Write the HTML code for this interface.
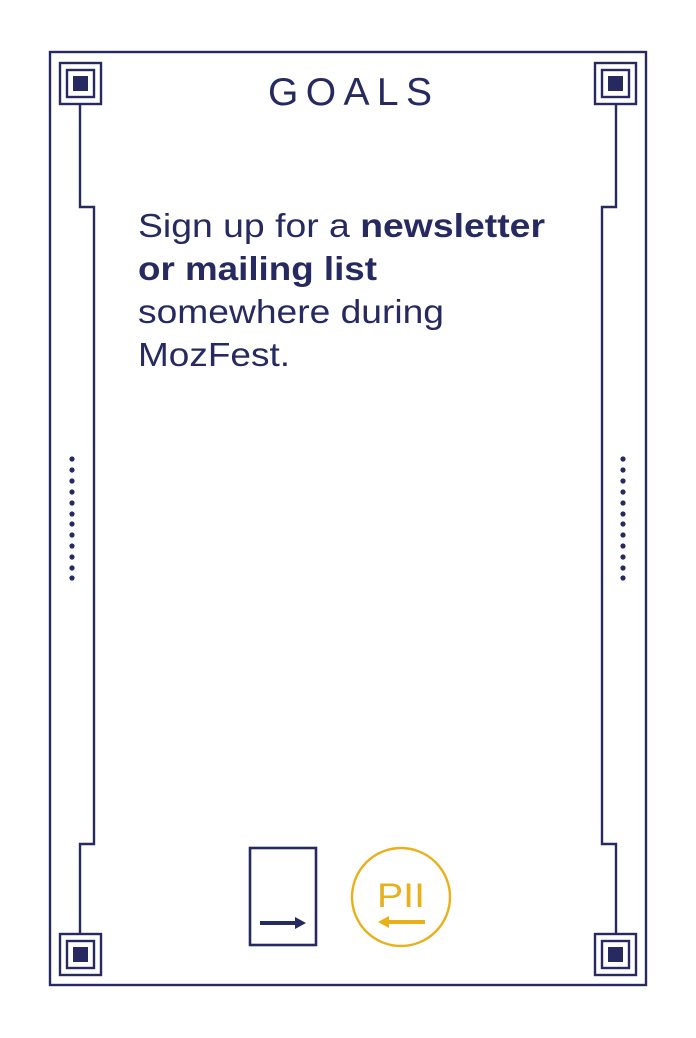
<!DOCTYPE html>
<html><head><style>html,body{margin:0;padding:0;background:#fff;}svg{display:block}</style></head>
<body>
<svg width="696" height="1038" viewBox="0 0 696 1038" xmlns="http://www.w3.org/2000/svg">
<g fill="none" stroke="#262a60" stroke-width="2.4">
<rect x="50" y="52" width="596" height="933"/>
<rect x="60" y="63" width="41" height="41"/><rect x="67" y="70" width="27" height="27"/>
<rect x="595" y="63" width="41" height="41"/><rect x="602" y="70" width="27" height="27"/>
<rect x="60" y="934" width="41" height="41"/><rect x="67" y="941" width="27" height="27"/>
<rect x="595" y="934" width="41" height="41"/><rect x="602" y="941" width="27" height="27"/>
<polyline points="80,104 80,207 94,207 94,844 80,844 80,934"/>
<polyline points="616,104 616,207 602,207 602,844 616,844 616,934"/>
<rect x="250" y="848" width="66" height="97" stroke-width="2.6"/>
</g>
<g fill="#262a60">
<rect x="73" y="76" width="15" height="15"/><rect x="608" y="76" width="15" height="15"/>
<rect x="73" y="947" width="15" height="15"/><rect x="608" y="947" width="15" height="15"/>
<g id="dots">
<circle cx="72" cy="459" r="2.6"/><circle cx="72" cy="470" r="2.6"/><circle cx="72" cy="481" r="2.6"/><circle cx="72" cy="492" r="2.6"/><circle cx="72" cy="503" r="2.6"/><circle cx="72" cy="514" r="2.6"/><circle cx="72" cy="524" r="2.6"/><circle cx="72" cy="535" r="2.6"/><circle cx="72" cy="546" r="2.6"/><circle cx="72" cy="557" r="2.6"/><circle cx="72" cy="568" r="2.6"/><circle cx="72" cy="578" r="2.6"/>
</g>
<use href="#dots" x="551"/>
<rect x="260" y="921" width="36" height="4"/>
<polygon points="295,917 306,923 295,929"/>
</g>
<circle cx="401" cy="897" r="49" fill="none" stroke="#e8b11c" stroke-width="2.4"/>
<text x="401" y="907" text-anchor="middle" font-family="Liberation Sans, sans-serif" font-size="34" fill="#e8b11c" textLength="48" lengthAdjust="spacingAndGlyphs">PII</text>
<rect x="388" y="920" width="37" height="4" fill="#e8b11c"/>
<polygon points="389,916 378,922 389,928" fill="#e8b11c"/>
<g font-family="Liberation Sans, sans-serif" fill="#262a60">
<text x="268" y="105" font-size="39" textLength="164" lengthAdjust="spacing">GOALS</text>
<text x="138" y="237" font-size="33" textLength="407" lengthAdjust="spacingAndGlyphs">Sign up for a <tspan font-weight="bold">newsletter</tspan></text>
<text x="138" y="280" font-size="33" font-weight="bold" textLength="239" lengthAdjust="spacingAndGlyphs">or mailing list</text>
<text x="138" y="323" font-size="33" textLength="306" lengthAdjust="spacingAndGlyphs">somewhere during</text>
<text x="138" y="366" font-size="33" textLength="152" lengthAdjust="spacingAndGlyphs">MozFest.</text>
</g>
</svg>
</body></html>
